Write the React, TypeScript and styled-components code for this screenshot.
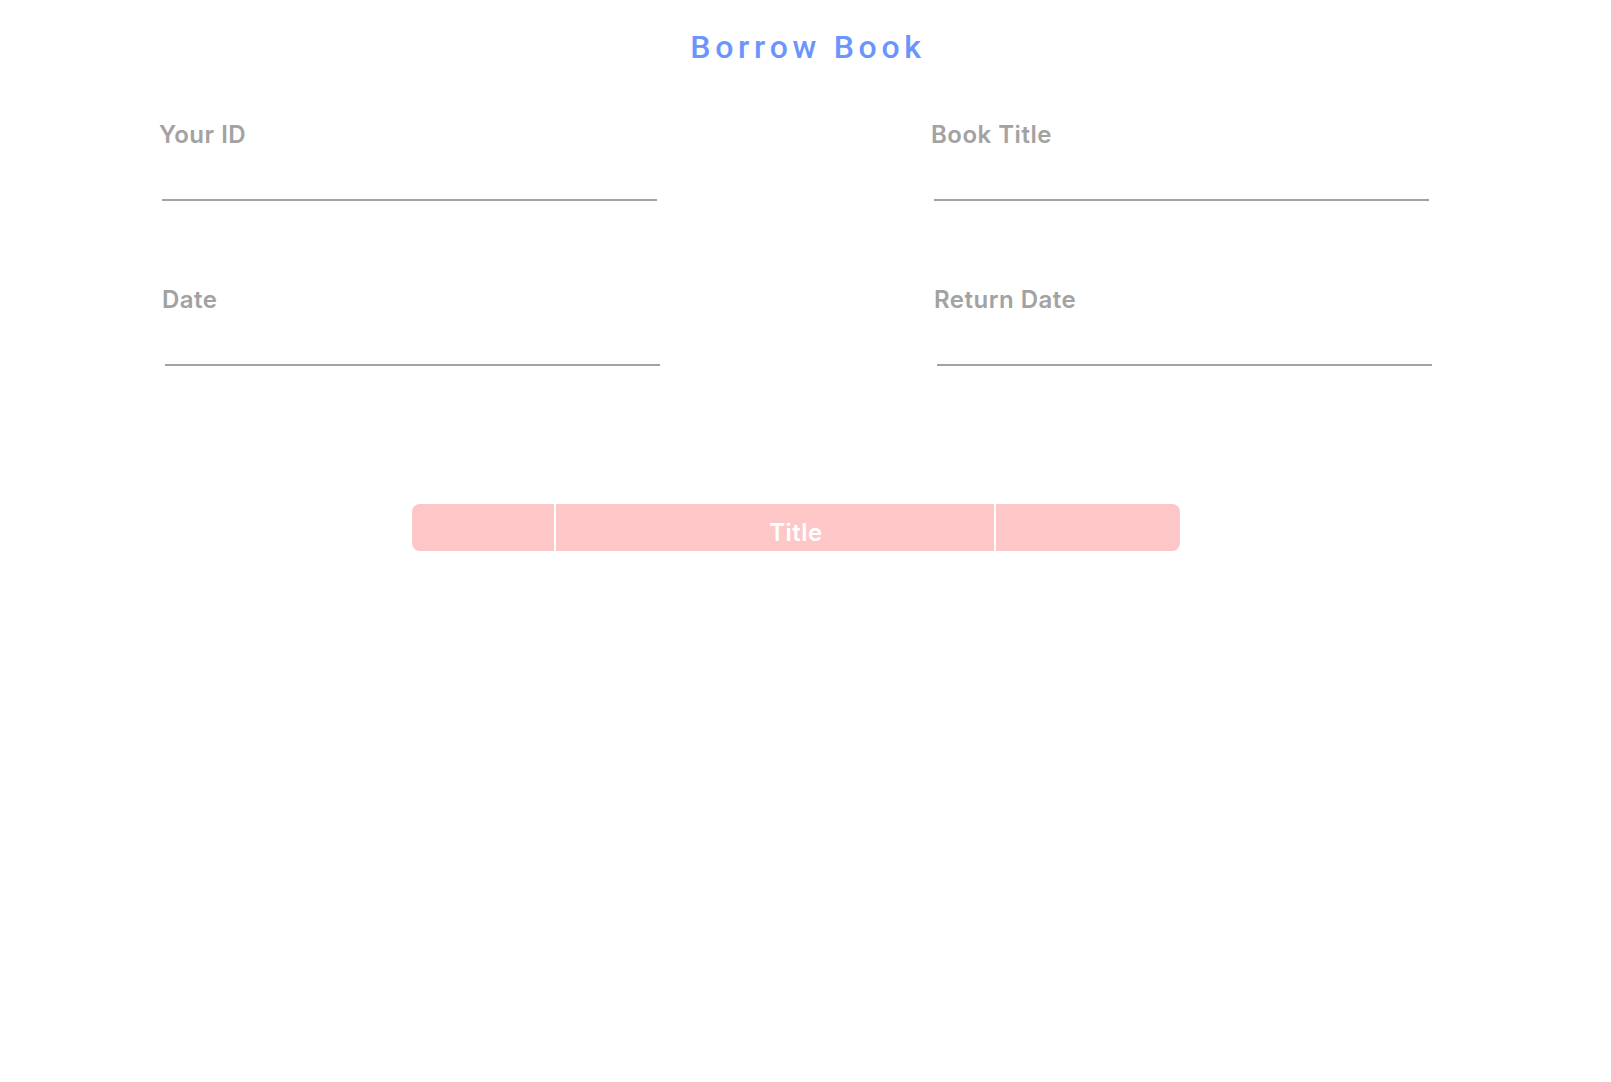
import React from "react";
import styled, { createGlobalStyle } from "styled-components";

const GlobalStyle = createGlobalStyle`
  html, body {
    margin: 0;
    padding: 0;
    background: #ffffff;
  }
  body {
    font-family: Inter, "Noto Sans", sans-serif;
  }
`;

const Page = styled.main`
  width: 1611px;
  min-height: 1082px;
  padding-top: 28px;
  box-sizing: border-box;
`;

const Heading = styled.h1`
  margin: 0;
  padding-left: 5px;
  font-family: Roboto, "Liberation Sans", sans-serif;
  font-weight: 500;
  font-size: 32px;
  line-height: 38px;
  letter-spacing: 4.7px;
  text-align: center;
  color: #6b95fd;
`;

const Form = styled.form`
  display: grid;
  grid-template-columns: 495px 495px;
  column-gap: 277px;
  row-gap: 85px;
  margin-top: 55px;
  padding-left: 162px;
`;

const Field = styled.label<{ $dx: number }>`
  display: flex;
  flex-direction: column;
  width: 495px;
  margin-left: ${(p) => p.$dx}px;
`;

const LabelText = styled.span`
  margin-left: -3px;
  font-family: Inter, "Noto Sans", sans-serif;
  font-weight: 600;
  font-size: 24px;
  line-height: 27px;
  letter-spacing: 0.5px;
  color: #a2a2a2;
`;

const LineInput = styled.input`
  height: 53px;
  box-sizing: border-box;
  border: none;
  border-bottom: 2px solid #a2a2a2;
  background: transparent;
  outline: none;
  padding: 0;
  font-family: Inter, sans-serif;
  font-size: 18px;
`;

const Table = styled.div`
  display: grid;
  grid-template-columns: 142px 438px 184px;
  column-gap: 2px;
  width: 768px;
  margin: 138px 0 0 412px;
  border-radius: 8px;
  overflow: hidden;
`;

const HeadCell = styled.div<{ $shift?: number }>`
  height: 47px;
  box-sizing: border-box;
  padding-top: 10px;
  padding-left: ${(p) => p.$shift ?? 0}px;
  background: #fdc7c7;
  color: #ffffff;
  font-family: Inter, "Noto Sans", sans-serif;
  font-weight: 600;
  font-size: 24px;
  line-height: 37px;
  letter-spacing: 0.5px;
  text-align: center;
`;

const fields = [
  { label: "Your ID", dx: 0 },
  { label: "Book Title", dx: 0 },
  { label: "Date", dx: 3 },
  { label: "Return Date", dx: 3 },
];

export default function App() {
  return (
    <>
      <GlobalStyle />
      <Page>
        <Heading>Borrow Book</Heading>
        <Form onSubmit={(e) => e.preventDefault()}>
          {fields.map((f) => (
            <Field key={f.label} $dx={f.dx}>
              <LabelText>{f.label}</LabelText>
              <LineInput type="text" />
            </Field>
          ))}
        </Form>
        <Table>
          <HeadCell />
          <HeadCell $shift={42}>Title</HeadCell>
          <HeadCell />
        </Table>
      </Page>
    </>
  );
}
